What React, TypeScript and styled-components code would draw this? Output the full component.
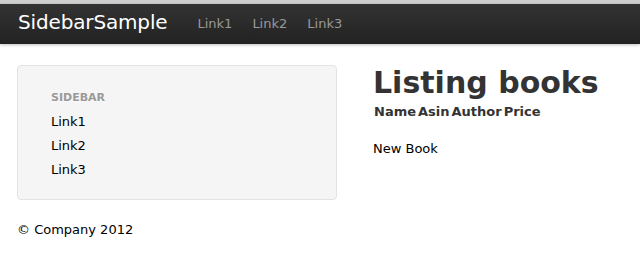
import React from "react";
import styled, { createGlobalStyle } from "styled-components";

const Global = createGlobalStyle`
  html, body { margin: 0; padding: 0; background: #fff; }
  body {
    font-family: "DejaVu Sans", Verdana, sans-serif;
    font-size: 13px;
    line-height: 18px;
    color: #333;
  }
`;

const Strip = styled.div`
  height: 4px;
  background: #cfcfcf;
`;

const Navbar = styled.div`
  height: 40px;
  background: linear-gradient(to bottom, #333333, #222222);
  box-shadow: 0 1px 3px rgba(0, 0, 0, 0.25);
  display: flex;
  align-items: flex-start;
  padding-left: 18px;
`;

const Brand = styled.a`
  display: block;
  padding: 8px 20px 12px 0;
  font-size: 20px;
  line-height: 20px;
  letter-spacing: -0.15px;
  color: #fff;
  text-decoration: none;
`;

const NavLinks = styled.ul`
  display: flex;
  list-style: none;
  margin: 0;
  padding: 0;
`;

const NavLink = styled.a`
  display: block;
  padding: 11px 10px;
  line-height: 18px;
  font-size: 13px;
  color: #999;
  text-decoration: none;
`;

const Main = styled.div`
  display: grid;
  grid-template-columns: 320px 1fr;
  column-gap: 36px;
  padding: 21px 0 0 17px;
  align-items: start;
`;

const Well = styled.div`
  background: #f5f5f5;
  border: 1px solid #e3e3e3;
  border-radius: 4px;
  padding: 20px 0 17px 33px;
`;

const NavHeader = styled.div`
  font-size: 11px;
  line-height: 24px;
  font-weight: bold;
  text-transform: uppercase;
  color: #999;
  text-shadow: 0 1px 0 rgba(255, 255, 255, 0.5);
`;

const SideLink = styled.a`
  display: block;
  line-height: 24px;
  color: #000;
  text-decoration: none;
`;

const Content = styled.div`
  display: flex;
  flex-direction: column;
`;

const Title = styled.h1`
  margin: 0;
  font-size: 30px;
  line-height: 36px;
  font-weight: bold;
  color: #333;
`;

const HeadRow = styled.div`
  display: flex;
  gap: 2px;
  padding-left: 1px;
  line-height: 20px;
  margin-top: 1px;
`;

const HeadCell = styled.span`
  font-size: 13px;
  font-weight: bold;
  color: #333;
`;

const NewLink = styled.a`
  margin-top: 18px;
  line-height: 18px;
  color: #000;
  text-decoration: none;
`;

const Footer = styled.footer`
  padding: 21px 0 0 17px;
  line-height: 18px;
  color: #000;
`;

export default function App() {
  return (
    <>
      <Global />
      <Strip />
      <Navbar>
        <Brand>SidebarSample</Brand>
        <NavLinks>
          {["Link1", "Link2", "Link3"].map((l) => (
            <li key={l}>
              <NavLink>{l}</NavLink>
            </li>
          ))}
        </NavLinks>
      </Navbar>
      <Main>
        <Well>
          <NavHeader>Sidebar</NavHeader>
          <SideLink>Link1</SideLink>
          <SideLink>Link2</SideLink>
          <SideLink>Link3</SideLink>
        </Well>
        <Content>
          <Title>Listing books</Title>
          <HeadRow>
            {["Name", "Asin", "Author", "Price"].map((h) => (
              <HeadCell key={h}>{h}</HeadCell>
            ))}
          </HeadRow>
          <NewLink>New Book</NewLink>
        </Content>
      </Main>
      <Footer>© Company 2012</Footer>
    </>
  );
}
